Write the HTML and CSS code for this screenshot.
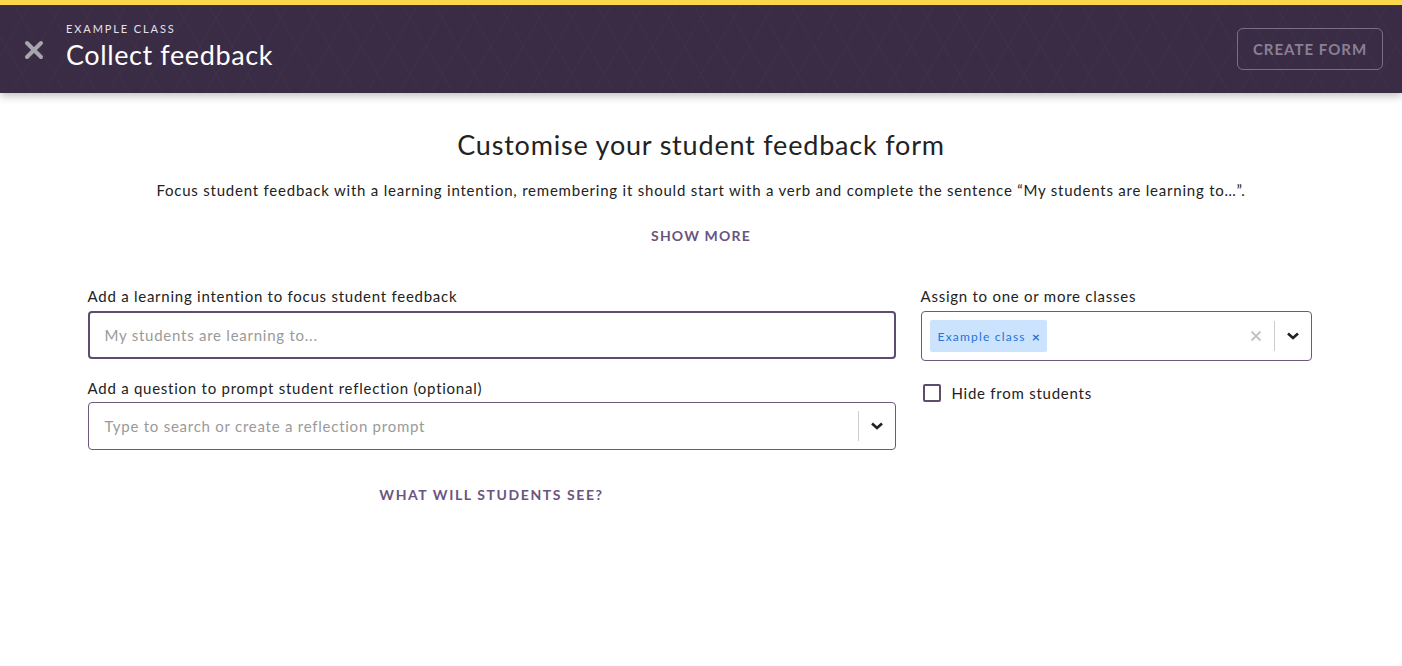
FILE: index.html
```html
<!DOCTYPE html>
<html lang="en">
<head>
<meta charset="utf-8">
<title>Collect feedback</title>
<link rel="stylesheet" href="styles.css">
</head>
<body>
<header class="topbar">
  <div class="topbar-left">
    <button class="close-btn" aria-label="Close">
      <svg width="20" height="20" viewBox="0 0 20 20"><path d="M3 3 L17 17 M17 3 L3 17" stroke="#a9a5ad" stroke-width="4" stroke-linecap="round"/></svg>
    </button>
    <div class="titles">
      <div class="eyebrow">EXAMPLE CLASS</div>
      <h1 class="title">Collect feedback</h1>
    </div>
  </div>
  <button class="create-btn">CREATE FORM</button>
</header>

<main class="content">
  <h2 class="heading">Customise your student feedback form</h2>
  <p class="intro">Focus student feedback with a learning intention, remembering it should start with a verb and complete the sentence “My students are learning to…”.</p>
  <button class="link-btn show-more">SHOW MORE</button>

  <div class="form-grid">
    <div class="col-left">
      <label class="field-label">Add a learning intention to focus student feedback</label>
      <div class="input focused">My students are learning to...</div>

      <label class="field-label second">Add a question to prompt student reflection (optional)</label>
      <div class="input select">
        <span class="placeholder">Type to search or create a reflection prompt</span>
        <span class="sep"></span>
        <span class="chev">
          <svg width="14" height="10" viewBox="0 0 14 10"><path d="M2 2.5 L7 7 L12 2.5" fill="none" stroke="#222" stroke-width="2.6"/></svg>
        </span>
      </div>

      <button class="link-btn preview">WHAT WILL STUDENTS SEE?</button>
    </div>

    <div class="col-right">
      <label class="field-label">Assign to one or more classes</label>
      <div class="input multi">
        <span class="chip">Example class <span class="chip-x">×</span></span>
        <span class="spacer"></span>
        <span class="clear">
          <svg width="12" height="12" viewBox="0 0 12 12"><path d="M1.5 1.5 L10.5 10.5 M10.5 1.5 L1.5 10.5" stroke="#c4c4c4" stroke-width="2"/></svg>
        </span>
        <span class="sep"></span>
        <span class="chev">
          <svg width="14" height="10" viewBox="0 0 14 10"><path d="M2 2.5 L7 7 L12 2.5" fill="none" stroke="#222" stroke-width="2.6"/></svg>
        </span>
      </div>
      <label class="check">
        <span class="box"></span>
        <span>Hide from students</span>
      </label>
    </div>
  </div>
</main>
</body>
</html>
```

FILE: styles.css
```css
* { box-sizing: border-box; }

html, body {
  margin: 0;
  padding: 0;
  background: #fff;
}

body {
  font-family: "Lato", "Open Sans", sans-serif;
  color: #222;
  border-top: 5px solid #fbd84a;
}

button {
  font-family: inherit;
  background: none;
  border: none;
  padding: 0;
  cursor: pointer;
}

.topbar {
  height: 88px;
  background-color: #3a2c45;
  background-image:
    repeating-linear-gradient(60deg, rgba(255,255,255,0.018) 0 1px, transparent 1px 28px),
    repeating-linear-gradient(-60deg, rgba(255,255,255,0.018) 0 1px, transparent 1px 28px);
  display: flex;
  align-items: center;
  justify-content: space-between;
  padding: 0 19px 0 23px;
  box-shadow: 0 3px 8px rgba(0,0,0,0.25);
  position: relative;
}

.topbar-left {
  display: flex;
  align-items: center;
  gap: 21px;
}

.close-btn {
  width: 22px;
  height: 22px;
  display: flex;
  align-items: center;
  justify-content: center;
  margin-top: 2px;
}

.titles {
  display: flex;
  flex-direction: column;
  margin-top: -6px;
}

.eyebrow {
  color: #e6e2ea;
  font-size: 11px;
  letter-spacing: 1.9px;
  line-height: 14px;
}

.title {
  margin: 3px 0 0;
  font-weight: 400;
  font-size: 27px;
  line-height: 32px;
  letter-spacing: 0.6px;
  color: #fff;
}

.create-btn {
  width: 146px;
  height: 42px;
  border: 1px solid rgba(255,255,255,0.32);
  border-radius: 6px;
  color: #8a8094;
  font-weight: 700;
  font-size: 15px;
  letter-spacing: 1px;
}

.content {
  display: flex;
  flex-direction: column;
  align-items: center;
  padding-top: 35px;
}

.heading {
  margin: 0;
  font-weight: 400;
  font-size: 27px;
  line-height: 34px;
  letter-spacing: 0.8px;
  color: #222;
}

.intro {
  margin: 17px 0 0;
  font-size: 15px;
  line-height: 22px;
  color: #222;
  letter-spacing: 0.78px;
}

.link-btn {
  color: #6a5580;
  font-weight: 700;
  font-size: 14px;
  letter-spacing: 1.2px;
  line-height: 20px;
}

.show-more {
  margin-top: 25px;
}

.form-grid {
  width: 1224px;
  display: grid;
  grid-template-columns: 808px 391px;
  column-gap: 25px;
  margin-top: 40px;
  margin-right: 3px;
}

.col-left, .col-right {
  display: flex;
  flex-direction: column;
}

.field-label {
  font-size: 15px;
  line-height: 20px;
  color: #222;
  letter-spacing: 0.75px;
  margin-bottom: 5px;
}

.field-label.second {
  margin-top: 19px;
  margin-bottom: 4px;
}

.input {
  height: 48px;
  border: 1px solid #6b5a7b;
  border-radius: 4px;
  display: flex;
  align-items: center;
  padding-left: 16px;
  font-size: 15px;
  color: #9a9a9a;
  letter-spacing: 0.75px;
}

.input.focused {
  border: 2px solid #5e4c6f;
  padding-left: 15px;
}

.select .placeholder {
  flex: 1;
}

.sep {
  width: 1px;
  height: 30px;
  background: #ccc;
}

.chev {
  width: 36px;
  display: flex;
  align-items: center;
  justify-content: center;
}

.preview {
  align-self: center;
  margin-top: 35px;
  letter-spacing: 1.6px;
}

.multi {
  height: 50px;
  padding-left: 8px;
}

.chip {
  background: #cce3fd;
  color: #1f74d6;
  font-size: 12px;
  letter-spacing: 1.2px;
  height: 32px;
  display: flex;
  align-items: center;
  padding: 0 6px 0 8px;
  border-radius: 2px;
  gap: 6px;
}

.chip-x {
  font-weight: 700;
  font-size: 14px;
}

.spacer { flex: 1; }

.clear {
  width: 36px;
  display: flex;
  align-items: center;
  justify-content: center;
}

.check {
  display: flex;
  align-items: center;
  gap: 11px;
  margin-top: 23px;
  margin-left: 2px;
  font-size: 15px;
  color: #222;
  letter-spacing: 0.75px;
}

.box {
  width: 18px;
  height: 18px;
  border: 2px solid #5e4c6f;
  border-radius: 2px;
}
```
